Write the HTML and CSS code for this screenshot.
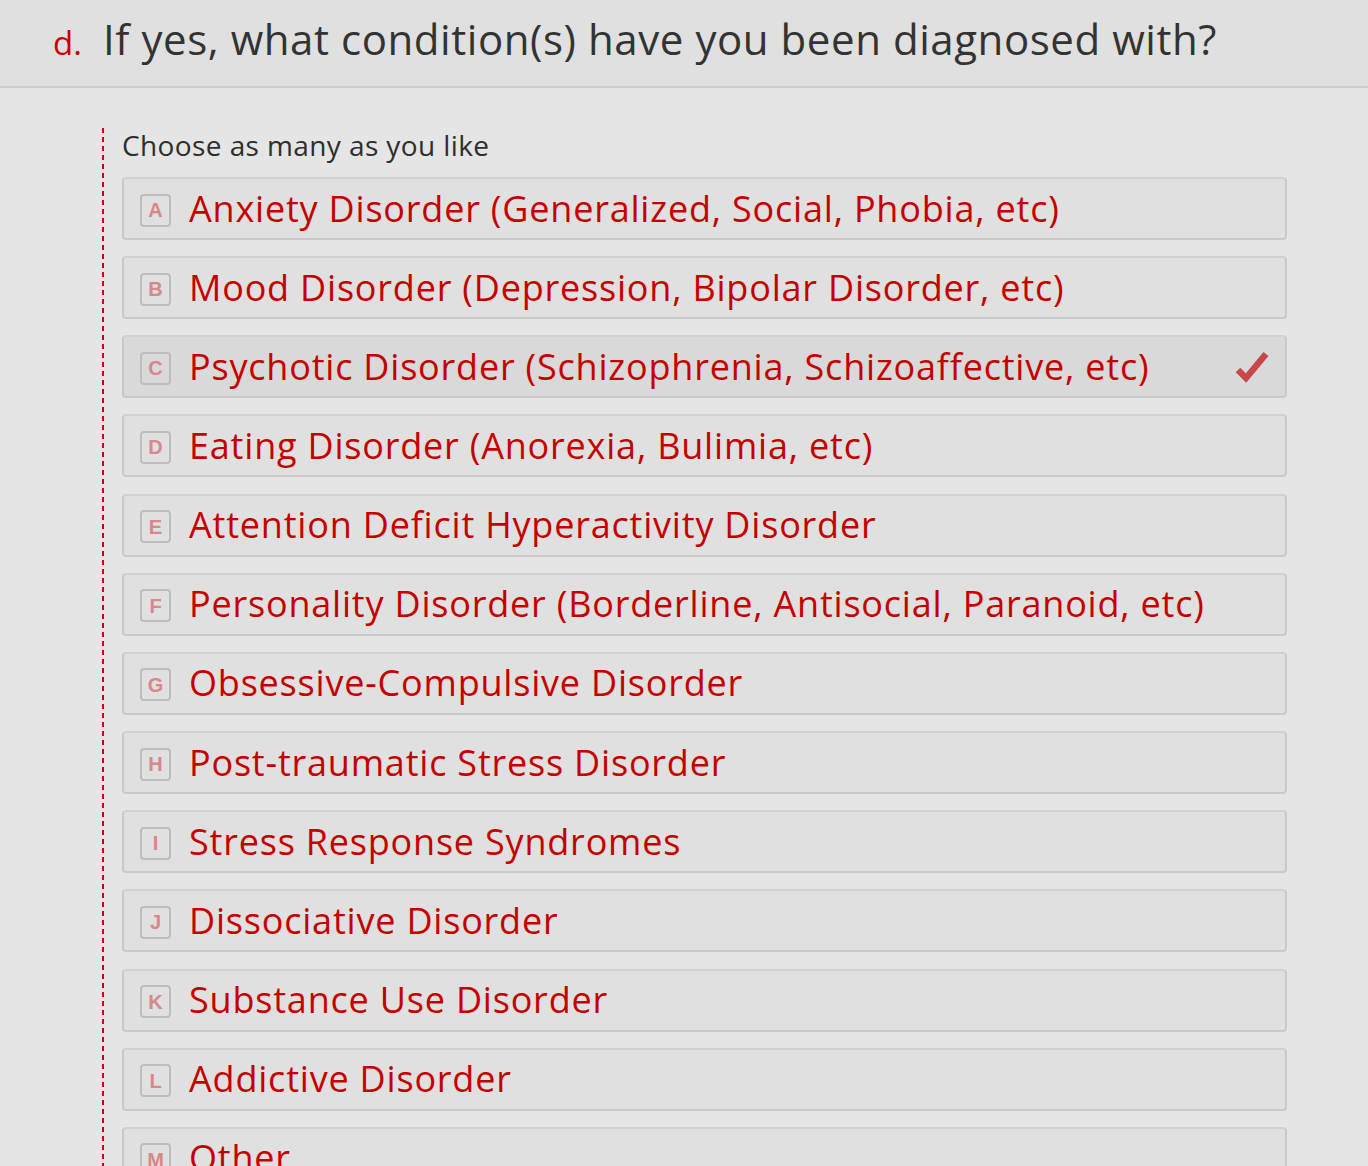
FILE: index.html
```html
<!DOCTYPE html>
<html lang="en">
<head>
<meta charset="utf-8">
<title>Question d</title>
<link rel="stylesheet" href="styles.css">
</head>
<body>
<header class="q-header">
  <span class="q-num">d.</span>
  <h1 class="q-title">If yes, what condition(s) have you been diagnosed with?</h1>
</header>
<section class="q-body">
  <div class="q-rule"></div>
  <div class="q-content">
    <p class="q-hint">Choose as many as you like</p>
    <ul class="choices">
      <li class="choice"><span class="key">A</span><span class="label">Anxiety Disorder (Generalized, Social, Phobia, etc)</span></li>
      <li class="choice"><span class="key">B</span><span class="label">Mood Disorder (Depression, Bipolar Disorder, etc)</span></li>
      <li class="choice selected"><span class="key">C</span><span class="label">Psychotic Disorder (Schizophrenia, Schizoaffective, etc)</span>
        <svg class="check" width="34" height="32" viewBox="0 0 34 32"><path d="M3 19 L11 27 L31 3" fill="none" stroke="#c9474b" stroke-width="6.5" stroke-linejoin="miter" stroke-linecap="butt"/></svg></li>
      <li class="choice"><span class="key">D</span><span class="label">Eating Disorder (Anorexia, Bulimia, etc)</span></li>
      <li class="choice"><span class="key">E</span><span class="label">Attention Deficit Hyperactivity Disorder</span></li>
      <li class="choice"><span class="key">F</span><span class="label">Personality Disorder (Borderline, Antisocial, Paranoid, etc)</span></li>
      <li class="choice"><span class="key">G</span><span class="label">Obsessive-Compulsive Disorder</span></li>
      <li class="choice"><span class="key">H</span><span class="label">Post-traumatic Stress Disorder</span></li>
      <li class="choice"><span class="key">I</span><span class="label">Stress Response Syndromes</span></li>
      <li class="choice"><span class="key">J</span><span class="label">Dissociative Disorder</span></li>
      <li class="choice"><span class="key">K</span><span class="label">Substance Use Disorder</span></li>
      <li class="choice"><span class="key">L</span><span class="label">Addictive Disorder</span></li>
      <li class="choice"><span class="key">M</span><span class="label">Other</span></li>
    </ul>
  </div>
</section>
</body>
</html>
```
FILE: styles.css
```css
html, body {
  margin: 0;
  padding: 0;
  background: #e4e5e4;
  font-family: "Open Sans", "Noto Sans", sans-serif;
}

.q-header {
  display: flex;
  align-items: baseline;
  height: 88px;
  box-sizing: border-box;
  padding: 11px 0 0 53px;
  background: #dfe0df;
  border-bottom: 2px solid #cbcccb;
}

.q-num {
  color: #cc0000;
  font-size: 33px;
  width: 50px;
}

.q-title {
  margin: 0;
  font-weight: 400;
  font-size: 42px;
  letter-spacing: 0.56px;
  color: #333333;
  line-height: 56px;
}

.q-body {
  display: flex;
  padding: 40px 81px 0 102px;
}

.q-rule {
  flex: 0 0 2px;
  background-image: linear-gradient(to bottom, #cc0000 5px, transparent 5px);
  background-size: 2px 9px;
  background-repeat: repeat-y;
}

.q-content {
  flex: 1;
  margin-left: 18px;
}

.q-hint {
  margin: 0 0 15px;
  font-size: 28px;
  letter-spacing: 0.4px;
  line-height: 34px;
  color: #2e2e2e;
}

.choices {
  list-style: none;
  margin: 0;
  padding: 0;
}

.choice {
  display: flex;
  align-items: center;
  height: 63px;
  box-sizing: border-box;
  margin-bottom: 16.17px;
  padding: 0 16px;
  background: #dfe0df;
  border: 2px solid #c8c9c8;
  border-top-color: #d0d1d0;
  border-radius: 4px;
}

.choice.selected {
  background: #d8d9d8;
}

.key {
  display: flex;
  align-items: center;
  justify-content: center;
  flex: 0 0 auto;
  width: 31px;
  height: 33px;
  box-sizing: border-box;
  margin-top: 3px;
  border: 2px solid #bcbdbc;
  border-radius: 4px;
  font-family: "Liberation Sans", Arial, sans-serif;
  font-weight: 700;
  font-size: 20px;
  line-height: 1;
  color: #d8878b;
}

.label {
  margin-left: 18px;
  font-size: 36px;
  letter-spacing: 0.8px;
  line-height: 48px;
  color: #c60000;
  white-space: nowrap;
}

.check {
  margin-left: auto;
  margin-right: 0;
}
```
